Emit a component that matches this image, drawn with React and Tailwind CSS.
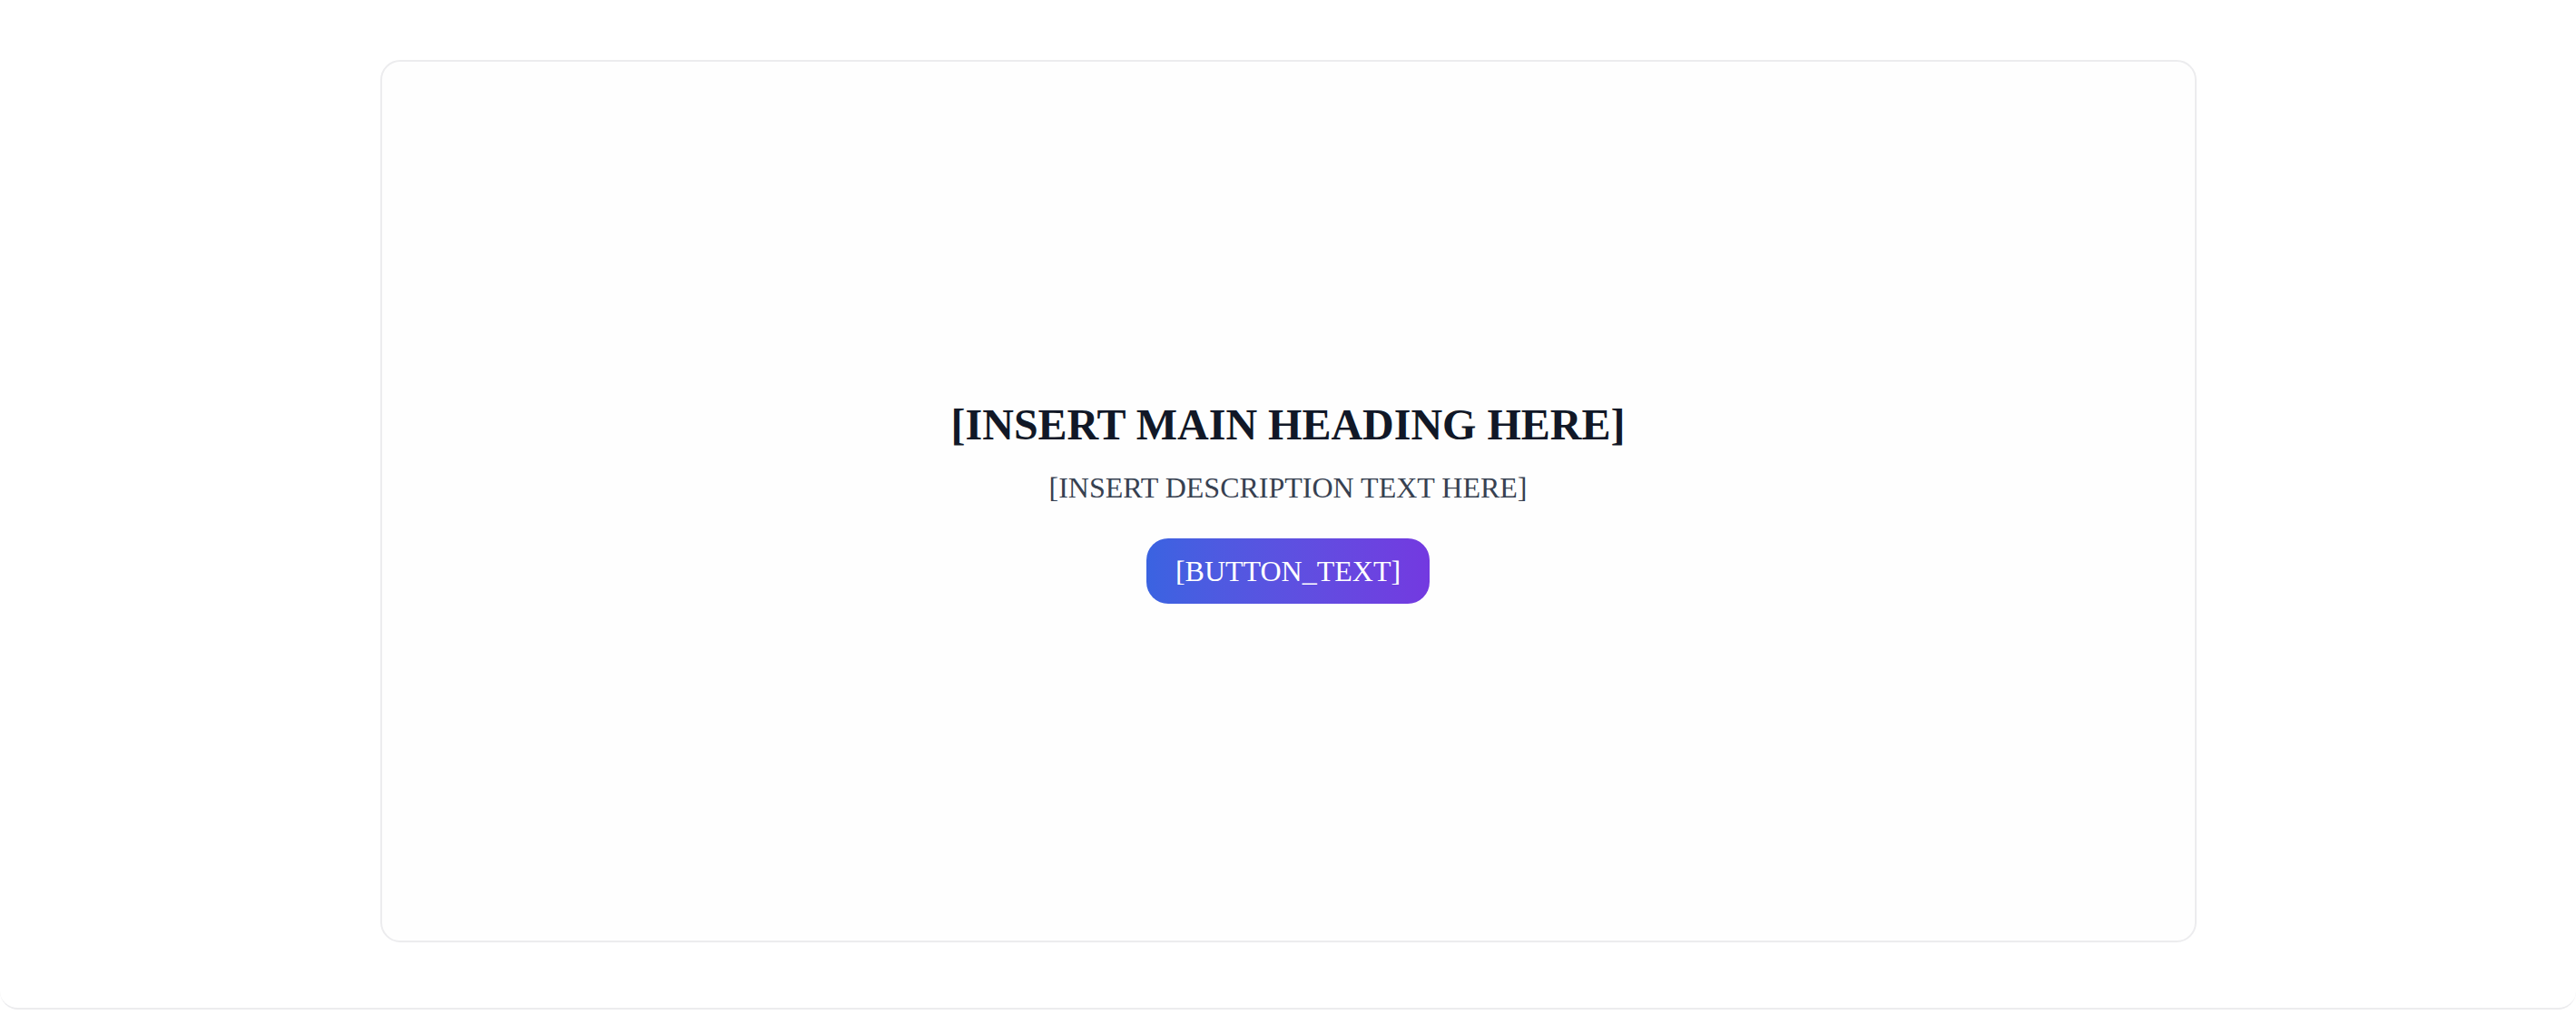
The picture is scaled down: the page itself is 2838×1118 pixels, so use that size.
export default function App() {
  return (
    <div className="w-full bg-white">
      <div
        className="h-[1112px] w-full rounded-[20px] border-b-2 border-[#ececee] bg-white pt-[66px] flex justify-center"
        style={{ fontFamily: '"Liberation Serif", "Times New Roman", serif' }}
      >
        <div className="w-[2001px] h-[972px] rounded-[22px] border-2 border-[#ececee] bg-[#fefefe] pt-[4px] flex flex-col items-center justify-center">
          <h1 className="text-[48px] leading-none font-bold text-[#111827] mb-[21px]">
            [INSERT MAIN HEADING HERE]
          </h1>
          <p className="text-[32px] leading-[48px] text-[#374151]">
            [INSERT DESCRIPTION TEXT HERE]
          </p>
          <button className="mt-8 h-[72px] px-8 rounded-[24px] text-[32px] text-white bg-gradient-to-r from-[#3a63e1] to-[#7339e0]">
            [BUTTON_TEXT]
          </button>
        </div>
      </div>
    </div>
  );
}
